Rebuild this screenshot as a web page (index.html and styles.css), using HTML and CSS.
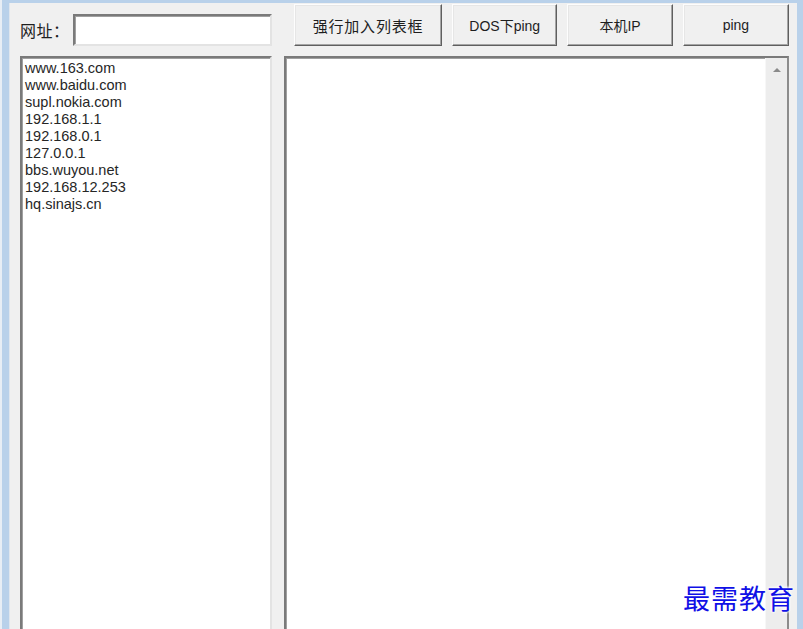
FILE: index.html
```html
<!DOCTYPE html>
<html lang="zh-CN">
<head>
    <meta charset="UTF-8">
    <title>ping</title>
    <link rel="stylesheet" href="styles.css">
</head>
<body>

    <div class="frame">
        <div class="client">

            <div class="url-row">
                <label for="url">网址：</label>
                <input type="text" id="url" class="url-input">
            </div>

            <div class="button-row">
                <button class="btn btn-wide">强行加入列表框</button>
                <button class="btn">DOS下ping</button>
                <button class="btn">本机IP</button>
                <button class="btn">ping</button>
            </div>

            <!-- host list -->
            <div class="host-list">
                <div>www.163.com</div>
                <div>www.baidu.com</div>
                <div>supl.nokia.com</div>
                <div>192.168.1.1</div>
                <div>192.168.0.1</div>
                <div>127.0.0.1</div>
                <div>bbs.wuyou.net</div>
                <div>192.168.12.253</div>
                <div>hq.sinajs.cn</div>
            </div>

            <!-- ping output -->
            <div class="output">
                <div class="output-text"></div>
                <div class="scrollbar">
                    <span class="arrow-up"></span>
                </div>
            </div>

        </div>
        <div class="watermark">最需教育</div>
    </div>

</body>
</html>
```

FILE: styles.css
```css
body {
    margin: 0;
    padding: 0;
    overflow: hidden;
    font-family: "Liberation Sans", "Noto Sans CJK SC", sans-serif;
    color: #1e1e1e;
}

.frame {
    position: relative;
    height: 629px;
    background-color: #b9d1ea;
    border-left: 2px solid #e8eef5;
    padding: 3px 6px 0 7px;
    box-sizing: border-box;
    overflow: hidden;
}

.client {
    background-color: #f0f0f0;
    border-left: 1px solid #dfe6ee;
    height: 100%;
    padding: 1px 0 0 10px;
    box-sizing: border-box;
    display: grid;
    grid-template-columns: 252px 505px;
    grid-template-rows: 42px 1fr;
    column-gap: 12px;
    row-gap: 10px;
}

.url-row {
    display: flex;
    align-items: flex-end;
    font-size: 16px;
}

.url-row label {
    margin-bottom: 4px;
    letter-spacing: 0.5px;
}

.url-input {
    margin-left: auto;
    width: 199px;
    height: 32px;
    box-sizing: border-box;
    border: 2px solid;
    border-color: #7a7a7a #e3e3e3 #e3e3e3 #7a7a7a;
    box-shadow: inset 1px 1px #a0a0a0;
    background: #fff;
    padding: 0;
}

.button-row {
    display: flex;
    gap: 10px;
    padding-left: 10px;
}

.btn {
    width: 106px;
    height: 42px;
    background-color: #f0f0f0;
    border: 1px solid;
    border-color: #fdfdfd #5f5f5f #5f5f5f #fdfdfd;
    box-shadow: inset -1px -1px #a5a5a5, inset 1px 1px #e6e6e6;
    font-family: "Liberation Sans", "Noto Sans CJK SC", sans-serif;
    font-size: 14px;
    color: #1e1e1e;
    padding: 0;
}

.btn-wide {
    width: 149px;
    font-size: 15px;
    letter-spacing: 0.8px;
}

.btn:last-child {
    width: 107px;
}

.host-list {
    height: 600px;
    background: #fff;
    border: 2px solid;
    border-color: #7a7a7a #e3e3e3 #e3e3e3 #7a7a7a;
    box-shadow: inset 1px 1px #a0a0a0;
    padding: 2px 3px;
    font-size: 14.5px;
    line-height: 17px;
    color: #262626;
}

.output {
    height: 600px;
    display: flex;
    background: #fff;
    border: 2px solid;
    border-color: #7a7a7a #e3e3e3 #e3e3e3 #7a7a7a;
    box-shadow: inset 1px 1px #a0a0a0;
    border-right: 2px solid #8c8c8c;
}

.output-text {
    flex: 1;
}

.scrollbar {
    width: 21px;
    background-color: #ededed;
    border-left: 1px solid #f7f7f7;
    display: flex;
    justify-content: center;
}

.arrow-up {
    margin-top: 10px;
    width: 0;
    height: 0;
    border-left: 4px solid transparent;
    border-right: 4px solid transparent;
    border-bottom: 4px solid #8a8a8a;
}

.watermark {
    position: absolute;
    left: 681px;
    top: 578px;
    font-family: "Noto Sans CJK SC", sans-serif;
    font-size: 27px;
    letter-spacing: 1px;
    color: #1010e6;
    text-shadow: 0 0 3px #fff, 0 0 3px #fff, 0 0 3px #fff;
}
```
